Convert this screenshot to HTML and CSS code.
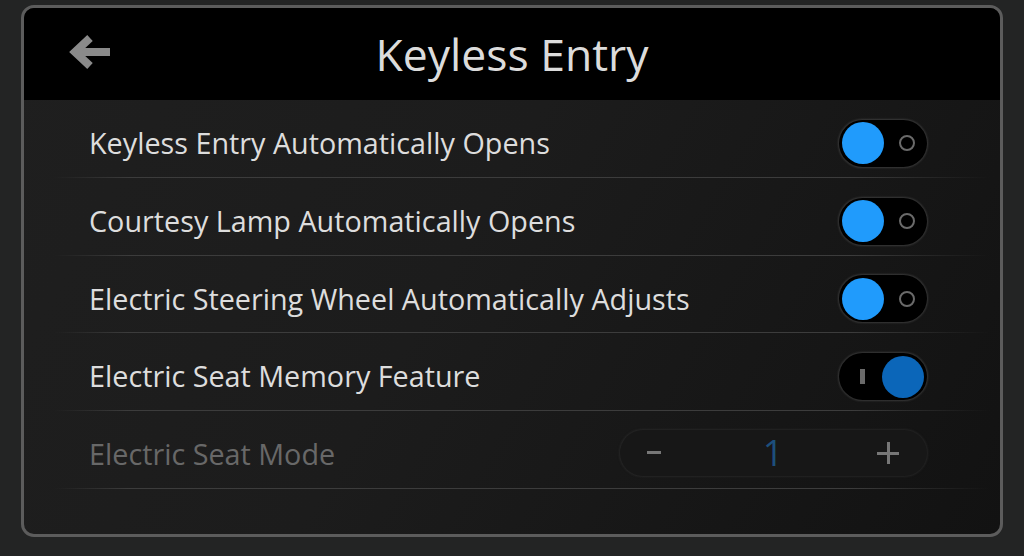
FILE: index.html
```html
<!DOCTYPE html>
<html>
<head>
<meta charset="utf-8">
<link rel="stylesheet" href="styles.css">
</head>
<body>
<div class="panel">
  <header class="header">
    <svg class="back" width="44" height="40" viewBox="0 0 44 40">
      <path d="M42 18 H8" stroke="#8a8a8a" stroke-width="8" fill="none"/>
      <path d="M22 4 L7 18 L22 32" stroke="#8a8a8a" stroke-width="8" fill="none" stroke-linejoin="miter"/>
    </svg>
    <h1 class="title">Keyless Entry</h1>
  </header>
  <div class="body">
    <div class="row">
      <span class="label">Keyless Entry Automatically Opens</span>
      <div class="toggle on"><span class="knob"></span><span class="ring"></span></div>
    </div>
    <div class="row">
      <span class="label">Courtesy Lamp Automatically Opens</span>
      <div class="toggle on"><span class="knob"></span><span class="ring"></span></div>
    </div>
    <div class="row">
      <span class="label">Electric Steering Wheel Automatically Adjusts</span>
      <div class="toggle on"><span class="knob"></span><span class="ring"></span></div>
    </div>
    <div class="row">
      <span class="label">Electric Seat Memory Feature</span>
      <div class="toggle off"><span class="bar"></span><span class="knob"></span></div>
    </div>
    <div class="row">
      <span class="label disabled">Electric Seat Mode</span>
      <div class="stepper">
        <span class="minus"></span>
        <span class="value">1</span>
        <span class="plus"></span>
      </div>
    </div>
  </div>
</div>
</body>
</html>
```
FILE: styles.css
```css
* { box-sizing: border-box; }
html, body { margin: 0; padding: 0; }
body {
  width: 1024px;
  height: 556px;
  background: #232424;
  font-family: "Open Sans", "DejaVu Sans", sans-serif;
  overflow: hidden;
  padding: 5px 21px 0 21px;
}
.panel {
  width: 982px;
  height: 532px;
  border: 3px solid #5c5c5c;
  border-radius: 13px;
  overflow: hidden;
  display: flex;
  flex-direction: column;
  background: linear-gradient(120deg, #1f1f1f 0%, #1c1c1c 45%, #121212 100%);
}
.header {
  height: 92px;
  background: #000;
  display: flex;
  align-items: center;
  justify-content: center;
  position: relative;
  flex-shrink: 0;
}
.back {
  position: absolute;
  left: 44px;
  top: 26px;
}
.title {
  margin: 0;
  font-weight: 400;
  font-size: 44.5px;
  color: #dcdcdc;
  line-height: 1;
}
.body {
  display: flex;
  flex-direction: column;
}
.row {
  height: 77.75px;
  display: flex;
  align-items: center;
  justify-content: space-between;
  padding: 9px 73px 0 65px;
  position: relative;
}
.row::after {
  content: "";
  position: absolute;
  left: 30px;
  right: 10px;
  bottom: 0;
  height: 1px;
  background: linear-gradient(90deg, rgba(70,70,70,0) 0%, #3c3c3c 8%, #3c3c3c 85%, rgba(70,70,70,0) 100%);
}
.label {
  font-size: 28.75px;
  color: #dddddd;
  line-height: 1;
}
.label.disabled { color: #686868; }
.toggle {
  width: 88px;
  height: 47px;
  border-radius: 24px;
  background: #000;
  box-shadow: 0 0 2px 1px rgba(120,120,120,0.35);
  display: flex;
  align-items: center;
  padding: 0 3px;
}
.toggle.on .knob {
  width: 42px;
  height: 42px;
  border-radius: 50%;
  background: #209bfc;
}
.toggle .ring {
  width: 16px;
  height: 16px;
  border: 2px solid #6a6a6a;
  border-radius: 50%;
  margin-left: 15px;
}
.toggle.off { justify-content: space-between; }
.toggle.off .bar {
  width: 5px;
  height: 15px;
  background: #6a6a6a;
  margin-left: 18px;
}
.toggle.off .knob {
  width: 42px;
  height: 42px;
  border-radius: 50%;
  background: #0b66b9;
}
.stepper {
  width: 307px;
  height: 46px;
  border-radius: 23px;
  background: #171717;
  box-shadow: 0 0 2px 1px rgba(60,60,60,0.4);
  display: flex;
  align-items: center;
  justify-content: space-between;
  padding: 0 28px 0 27px;
  margin-bottom: 3px;
}
.minus {
  width: 14px;
  height: 3px;
  background: #777;
}
.value {
  font-size: 36px;
  color: #1d4f7c;
  line-height: 1;
  margin-left: 8px;
}
.plus {
  width: 22px;
  height: 22px;
  position: relative;
}
.plus::before, .plus::after {
  content: "";
  position: absolute;
  background: #777;
}
.plus::before { left: 0; right: 0; top: 10px; height: 3px; }
.plus::after { top: 0; bottom: 0; left: 10px; width: 3px; }
```
